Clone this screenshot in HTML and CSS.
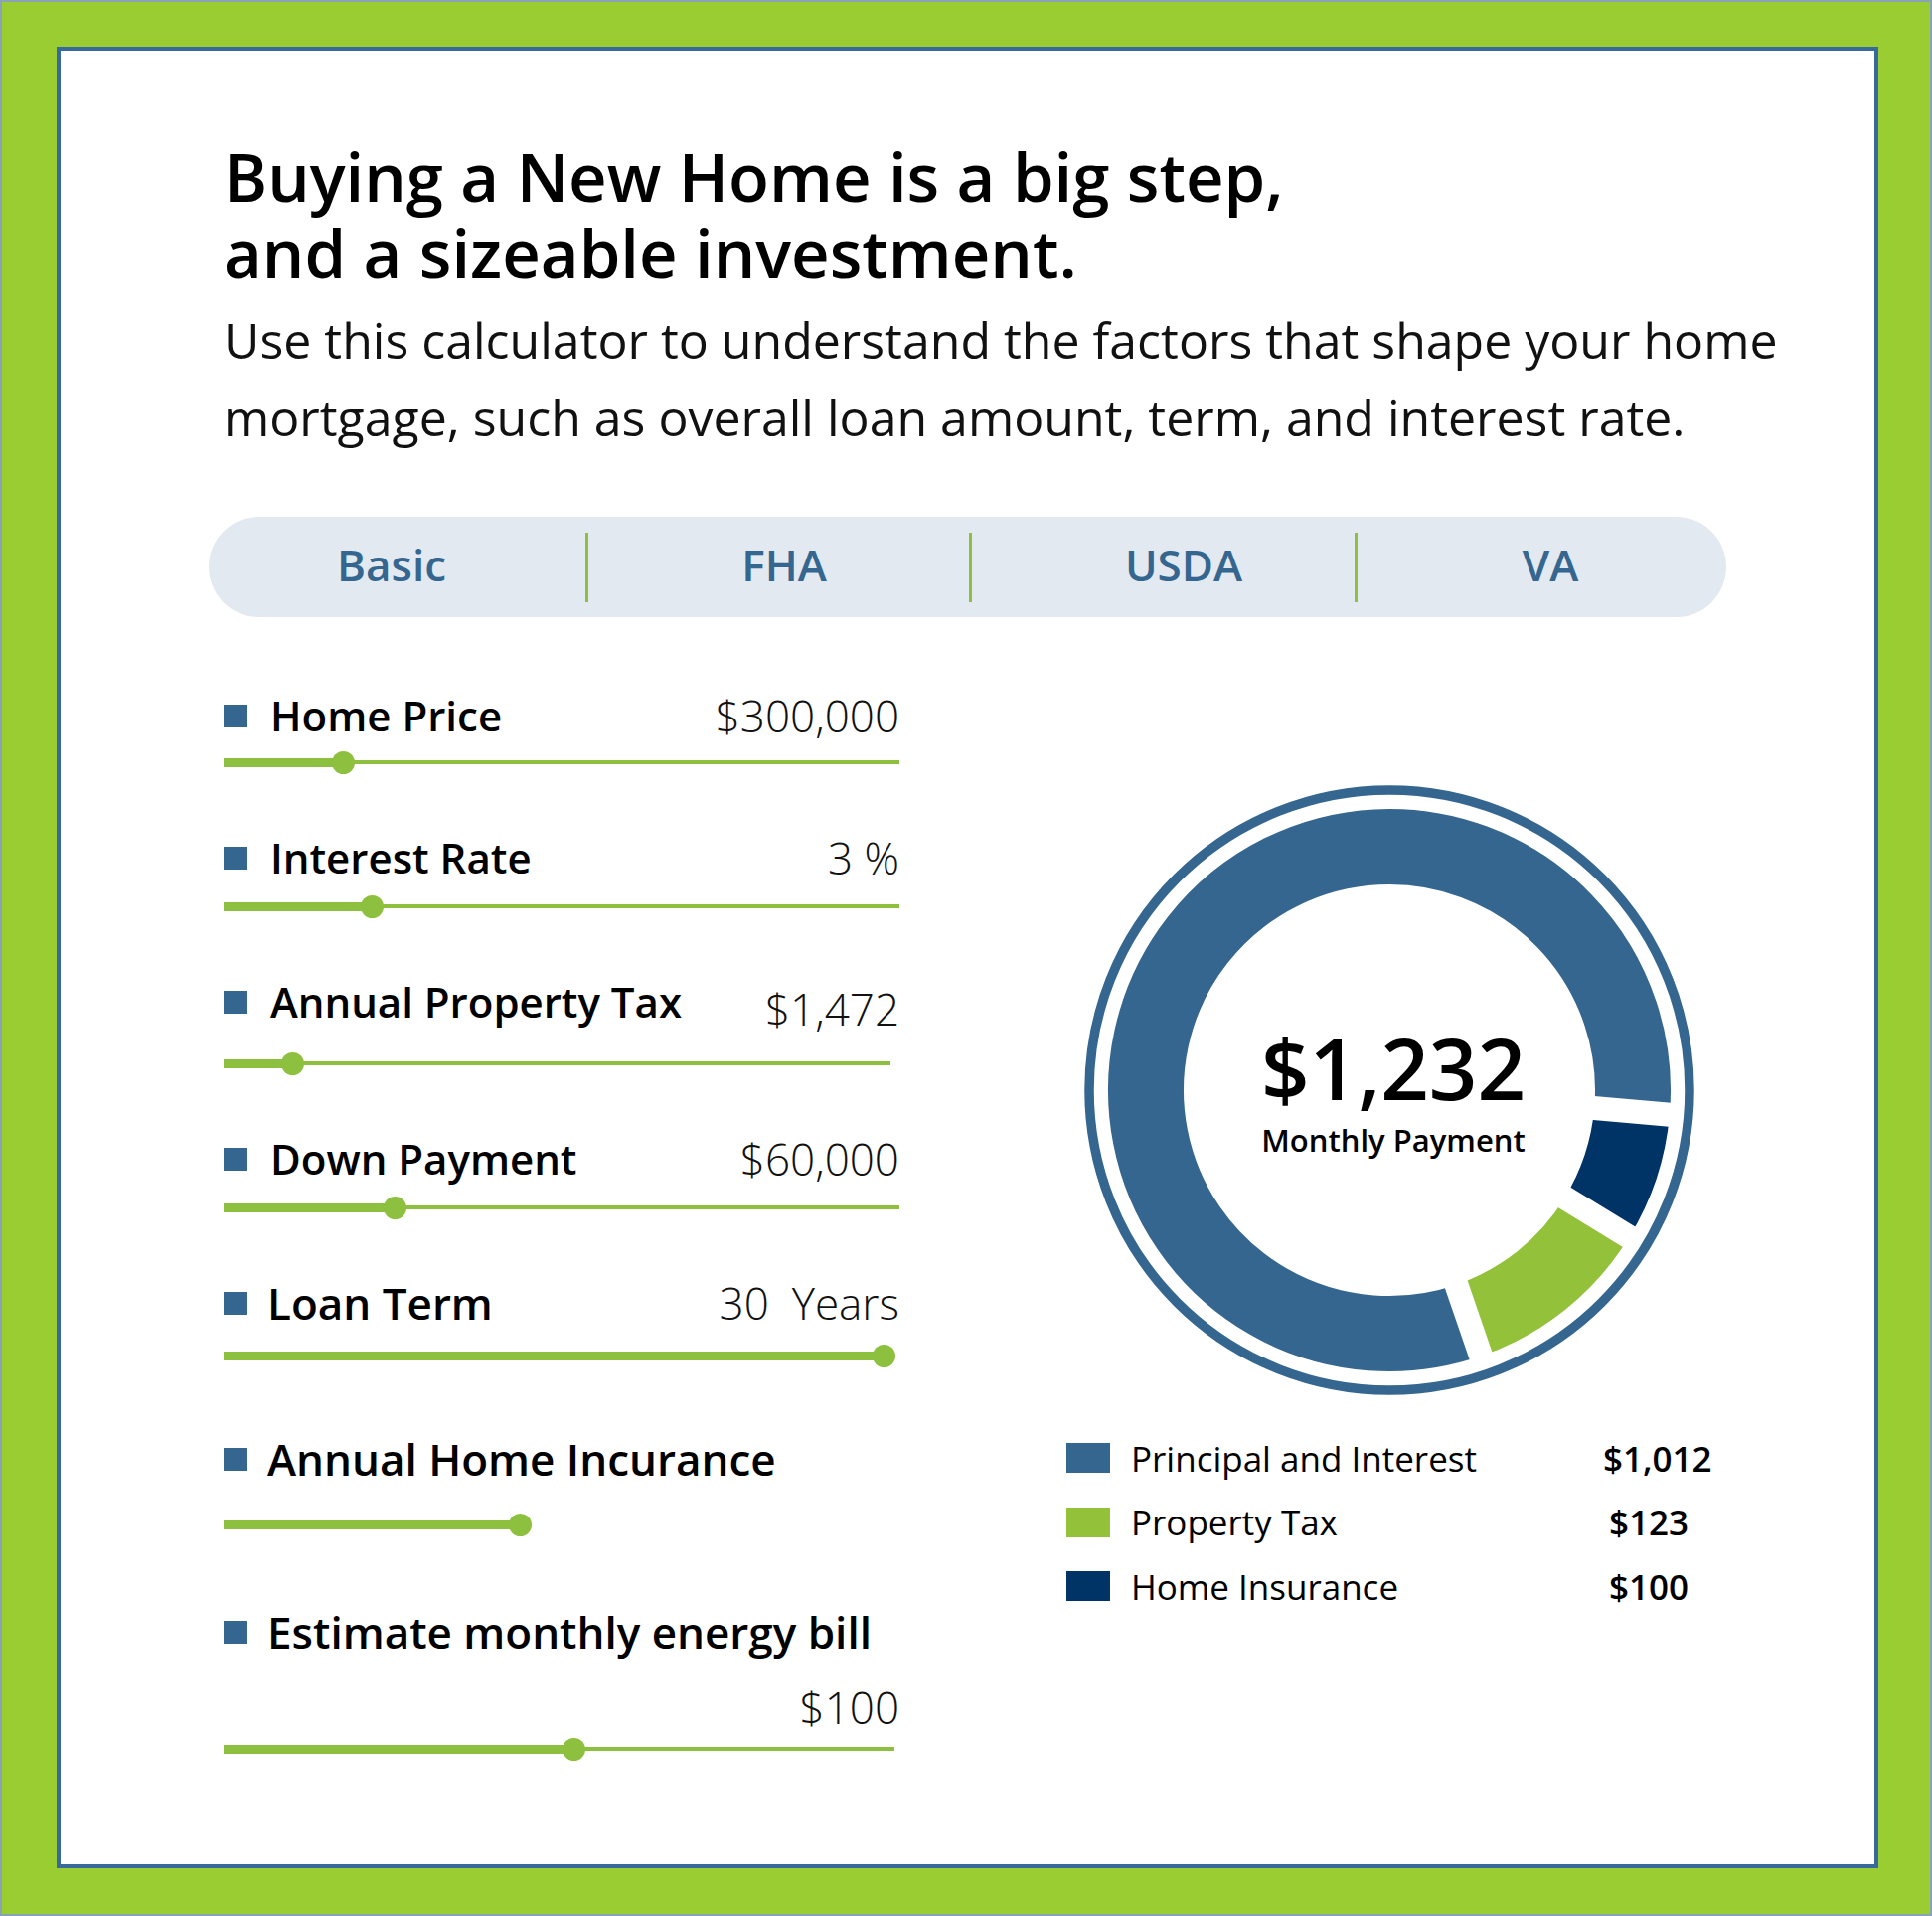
FILE: index.html
```html
<!DOCTYPE html>
<html lang="en">
<head>
<meta charset="utf-8">
<title>Mortgage Calculator</title>
<link rel="stylesheet" href="styles.css">
</head>
<body>
<div class="page">
  <div class="card">
    <h1 class="title"><span class="title-line">Buying a New Home is a big step,</span><span class="title-line">and a sizeable investment.</span></h1>
    <p class="intro">Use this calculator to understand the factors that shape your home<br>mortgage, such as overall loan amount, term, and interest rate.</p>

    <nav class="tabs">
      <span class="tab tab--basic">Basic</span>
      <span class="divider"></span>
      <span class="tab tab--fha">FHA</span>
      <span class="divider"></span>
      <span class="tab tab--usda">USDA</span>
      <span class="divider"></span>
      <span class="tab tab--va">VA</span>
    </nav>

    <div class="main">
      <div class="inputs">
        <div class="field">
          <div class="field-head"><span class="bullet"></span><span class="label">Home Price</span><span class="value">$300,000</span></div>
          <div class="slider slider--first"><span class="fill" style="width:120px"></span><span class="knob"></span><span class="rest"></span></div>
        </div>
        <div class="field">
          <div class="field-head"><span class="bullet"></span><span class="label">Interest Rate</span><span class="value">3 %</span></div>
          <div class="slider"><span class="fill" style="width:149px"></span><span class="knob"></span><span class="rest"></span></div>
        </div>
        <div class="field field--tax">
          <div class="field-head"><span class="bullet"></span><span class="label">Annual Property Tax</span><span class="value value--low">$1,472</span></div>
          <div class="slider slider--short"><span class="fill" style="width:69px"></span><span class="knob"></span><span class="rest"></span></div>
        </div>
        <div class="field">
          <div class="field-head"><span class="bullet"></span><span class="label">Down Payment</span><span class="value">$60,000</span></div>
          <div class="slider"><span class="fill" style="width:172px"></span><span class="knob"></span><span class="rest"></span></div>
        </div>
        <div class="field field--term field--large">
          <div class="field-head"><span class="bullet"></span><span class="label">Loan Term</span><span class="value">30&nbsp; Years</span></div>
          <div class="slider"><span class="fill" style="width:664px"></span><span class="knob"></span></div>
        </div>
        <div class="field field--insurance field--large">
          <div class="field-head"><span class="bullet"></span><span class="label">Annual Home Incurance</span></div>
          <div class="slider slider--auto"><span class="fill" style="width:298px"></span><span class="knob"></span></div>
        </div>
        <div class="field field--energy field--large">
          <div class="field-head"><span class="bullet"></span><span class="label">Estimate monthly energy bill</span></div>
          <div class="value-line">$100</div>
          <div class="slider slider--tight"><span class="fill" style="width:352px"></span><span class="knob"></span><span class="rest"></span></div>
        </div>
      </div>

      <div class="summary">
        <div class="donut">
          <svg class="donut-chart" width="620" height="620" viewBox="0 0 620 620">
            <circle cx="310" cy="310" r="302" fill="none" stroke="#35668f" stroke-width="9.5"/>
            <path d="M 389.76 541.65 A 245 245 0 1 1 554.07 331.35" fill="none" stroke="#35668f" stroke-width="76"/>
            <path d="M 554.07 331.35 A 245 245 0 0 1 518.90 438.01" fill="none" stroke="#003366" stroke-width="76"/>
            <path d="M 518.90 438.01 A 245 245 0 0 1 389.76 541.65" fill="none" stroke="#93c13a" stroke-width="76"/>
            <line x1="310" y1="310" x2="600.89" y2="335.45" stroke="#fff" stroke-width="24"/>
            <line x1="310" y1="310" x2="558.97" y2="462.57" stroke="#fff" stroke-width="24"/>
            <line x1="310" y1="310" x2="405.07" y2="586.09" stroke="#fff" stroke-width="24"/>
          </svg>
          <div class="donut-label">
            <div class="amount">$1,232</div>
            <div class="caption">Monthly Payment</div>
          </div>
        </div>
        <ul class="legend">
          <li class="legend-row"><span class="swatch swatch--principal"></span><span class="legend-label">Principal and Interest</span><span class="legend-value">$1,012</span></li>
          <li class="legend-row"><span class="swatch swatch--tax"></span><span class="legend-label">Property Tax</span><span class="legend-value legend-value--inset">$123</span></li>
          <li class="legend-row"><span class="swatch swatch--insurance"></span><span class="legend-label">Home Insurance</span><span class="legend-value legend-value--inset">$100</span></li>
        </ul>
      </div>
    </div>
  </div>
</div>
</body>
</html>
```

FILE: styles.css
```css
html, body {
  margin: 0;
  padding: 0;
}

body {
  font-family: "Open Sans", "Noto Sans", sans-serif;
  color: #000;
}

.page {
  width: 1944px;
  height: 1928px;
  box-sizing: border-box;
  background: #9acd32;
  border: 2px solid #8aa2b8;
  padding: 45px 0 0 55px;
}

.card {
  width: 1833px;
  height: 1833px;
  box-sizing: border-box;
  background: #fff;
  border: 4px solid #38699c;
  padding: 88px 0 0 164px;
}

.title {
  margin: 0;
  font-weight: 600;
  font-size: 67px;
  line-height: 77px;
  color: #000;
}

.title-line {
  display: block;
}

.intro {
  margin: 10px 0 0;
  font-weight: 400;
  font-size: 50px;
  line-height: 78px;
  color: #111;
}

/* Tabs */
.tabs {
  margin: 61px 0 0 -15px;
  width: 1527px;
  height: 101px;
  border-radius: 51px;
  background: #e2e9f0;
  display: grid;
  grid-template-columns: 379px 3px 383px 3px 385px 3px 1fr;
  align-items: center;
}

.tab {
  text-align: center;
  font-weight: 600;
  font-size: 44px;
  line-height: 1;
  color: #35668f;
  padding-bottom: 6px;
}

.tab--basic { padding-right: 11px; }
.tab--fha { padding-left: 11px; }
.tab--usda { padding-left: 41px; }
.tab--va { padding-left: 17px; }

.divider {
  height: 70px;
  background: #8dc03f;
}

/* Main area */
.main {
  display: flex;
  margin-top: 75px;
}

.inputs {
  width: 680px;
  flex: none;
}

.field {
  margin-top: 60px;
}

.field:first-child {
  margin-top: 0;
}

.field-head {
  display: flex;
  align-items: center;
  height: 48px;
  width: 680px;
}

.bullet {
  flex: none;
  width: 24px;
  height: 23px;
  background: #35668f;
  margin-right: 23px;
}

.label {
  font-weight: 600;
  font-size: 42px;
  line-height: 48px;
  color: #000;
  white-space: nowrap;
}

.field--large .label {
  font-size: 44px;
  margin-left: -3px;
}

.value {
  margin-left: auto;
  font-weight: 300;
  font-size: 44px;
  line-height: 48px;
  color: #111;
  white-space: nowrap;
}

.value--low {
  padding-top: 14px;
}

.value-line {
  margin-top: 28px;
  width: 680px;
  text-align: right;
  font-weight: 300;
  font-size: 44px;
  line-height: 48px;
  color: #111;
}

/* Sliders */
.slider {
  display: flex;
  align-items: center;
  height: 24px;
  width: 680px;
  margin-top: 13px;
}

.slider--first { margin-top: 11px; }
.slider--short { width: 671px; }
.slider--auto { width: auto; }
.slider--tight { width: 675px; margin-top: 6px; }

.field--tax .slider { margin-top: 26px; }
.field--term .slider { margin-top: 17px; }
.field--insurance { margin-top: 68px; }
.field--insurance .slider { margin-top: 30px; }
.field--energy { margin-top: 72px; }

.fill {
  flex: none;
  height: 9px;
  background: #8dc03f;
}

.knob {
  flex: none;
  position: relative;
  z-index: 1;
  width: 23px;
  height: 23px;
  border-radius: 50%;
  background: #8dc03f;
  margin: 0 -11.5px;
}

.rest {
  flex: 1;
  height: 4px;
  background: #8dc03f;
}

/* Summary */
.summary {
  margin-left: 168px;
  padding-top: 91px;
}

.donut {
  display: grid;
  width: 620px;
  height: 620px;
  margin-left: 15px;
}

.donut > * {
  grid-area: 1 / 1;
}

.donut-chart {
  display: block;
}

.donut-label {
  align-self: center;
  justify-self: center;
  text-align: center;
  padding: 0 0 2px 8px;
}

.amount {
  font-weight: 600;
  font-size: 85px;
  line-height: 95px;
  color: #000;
}

.caption {
  margin-top: 7px;
  font-weight: 600;
  font-size: 31px;
  line-height: 36px;
  color: #000;
}

.legend {
  list-style: none;
  margin: 28px 0 0;
  padding: 0;
}

.legend-row {
  display: flex;
  align-items: center;
  height: 64.5px;
}

.swatch {
  flex: none;
  width: 44px;
  height: 30px;
}

.swatch--principal { background: #35668f; }
.swatch--tax { background: #93c13a; }
.swatch--insurance { background: #003366; }

.legend-label {
  width: 475px;
  margin-left: 21px;
  font-weight: 400;
  font-size: 35px;
  color: #000;
}

.legend-value {
  font-weight: 600;
  font-size: 35px;
  color: #000;
}

.legend-value--inset {
  margin-left: 6px;
}
```
